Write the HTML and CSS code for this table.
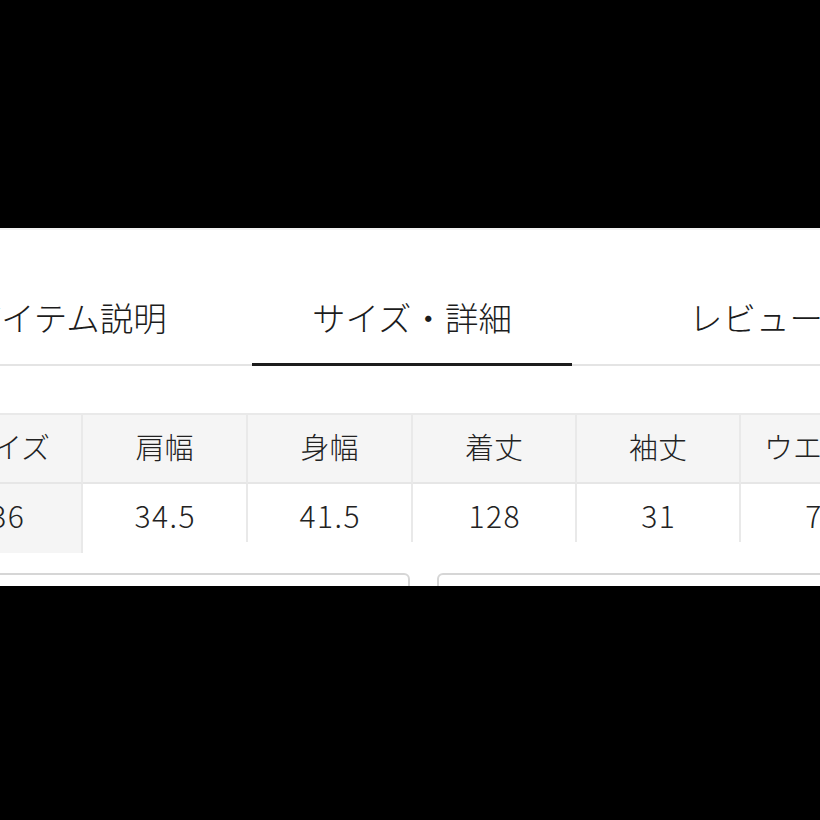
FILE: index.html
```html
<!DOCTYPE html>
<html lang="ja">
<head>
<meta charset="utf-8">
<title>サイズ・詳細</title>
<link rel="stylesheet" href="styles.css">
</head>
<body>
<div class="panel">
  <nav class="tabs">
    <div class="tab">アイテム説明</div>
    <div class="tab active">サイズ・詳細</div>
    <div class="tab">レビュー</div>
  </nav>
  <div class="table">
    <div class="cell head first">サイズ</div>
    <div class="cell head">肩幅</div>
    <div class="cell head">身幅</div>
    <div class="cell head">着丈</div>
    <div class="cell head">袖丈</div>
    <div class="cell head">ウエスト</div>
    <div class="cell data first">36</div>
    <div class="cell data">34.5</div>
    <div class="cell data">41.5</div>
    <div class="cell data">128</div>
    <div class="cell data">31</div>
    <div class="cell data">72</div>
  </div>
  <div class="boxes">
    <div class="box"></div>
    <div class="box"></div>
  </div>
</div>
</body>
</html>
```

FILE: styles.css
```css
html, body {
  margin: 0;
  padding: 0;
  background: #000;
}
body {
  font-family: "Noto Sans CJK JP", "Noto Sans", sans-serif;
  font-weight: 300;
  color: #222;
}
.panel {
  margin-top: 228px;
  height: 358px;
  background: #fff;
  overflow: hidden;
  border-top: 2px solid #f2f2f2;
  box-sizing: border-box;
}
.tabs {
  display: grid;
  grid-template-columns: repeat(3, 344px);
  margin-left: -104px;
  width: 1032px;
  border-bottom: 2px solid #e4e4e4;
}
.tab {
  position: relative;
  height: 134px;
  box-sizing: border-box;
  padding-bottom: 27px;
  display: flex;
  align-items: flex-end;
  justify-content: center;
  font-size: 33.5px;
  line-height: 40px;
  color: #1c1c1c;
}
.tab.active::after {
  content: "";
  position: absolute;
  left: 12px;
  right: 12px;
  bottom: -2px;
  height: 3px;
  background: #1c1c1c;
}
.table {
  margin-top: 47px;
  margin-left: -67px;
  display: grid;
  grid-template-columns: 150px 165px 165px 164px 164px 164px;
  grid-template-rows: 69px 58px 11px;
  border-top: 2px solid #e9e9e9;
  width: 972px;
}
.cell {
  display: flex;
  align-items: center;
  justify-content: center;
  box-sizing: border-box;
  border-right: 2px solid #e9e9e9;
  font-size: 29px;
  color: #222;
}
.head {
  background: #f5f5f5;
  border-bottom: 2px solid #e6e6e6;
  padding-bottom: 6px;
}
.data {
  padding-top: 4px;
  font-size: 30px;
  letter-spacing: 1.5px;
  text-indent: 1.5px;
}
.data.first {
  grid-row: 2 / 4;
  background: #f5f5f5;
  align-items: flex-start;
  padding-top: 9px;
}
.boxes {
  display: flex;
  gap: 27px;
  margin-top: 20px;
  margin-left: -30px;
}
.box {
  flex: 0 0 440px;
  height: 60px;
  box-sizing: border-box;
  border: 2px solid #d6d6d6;
  border-radius: 6px;
}
```
